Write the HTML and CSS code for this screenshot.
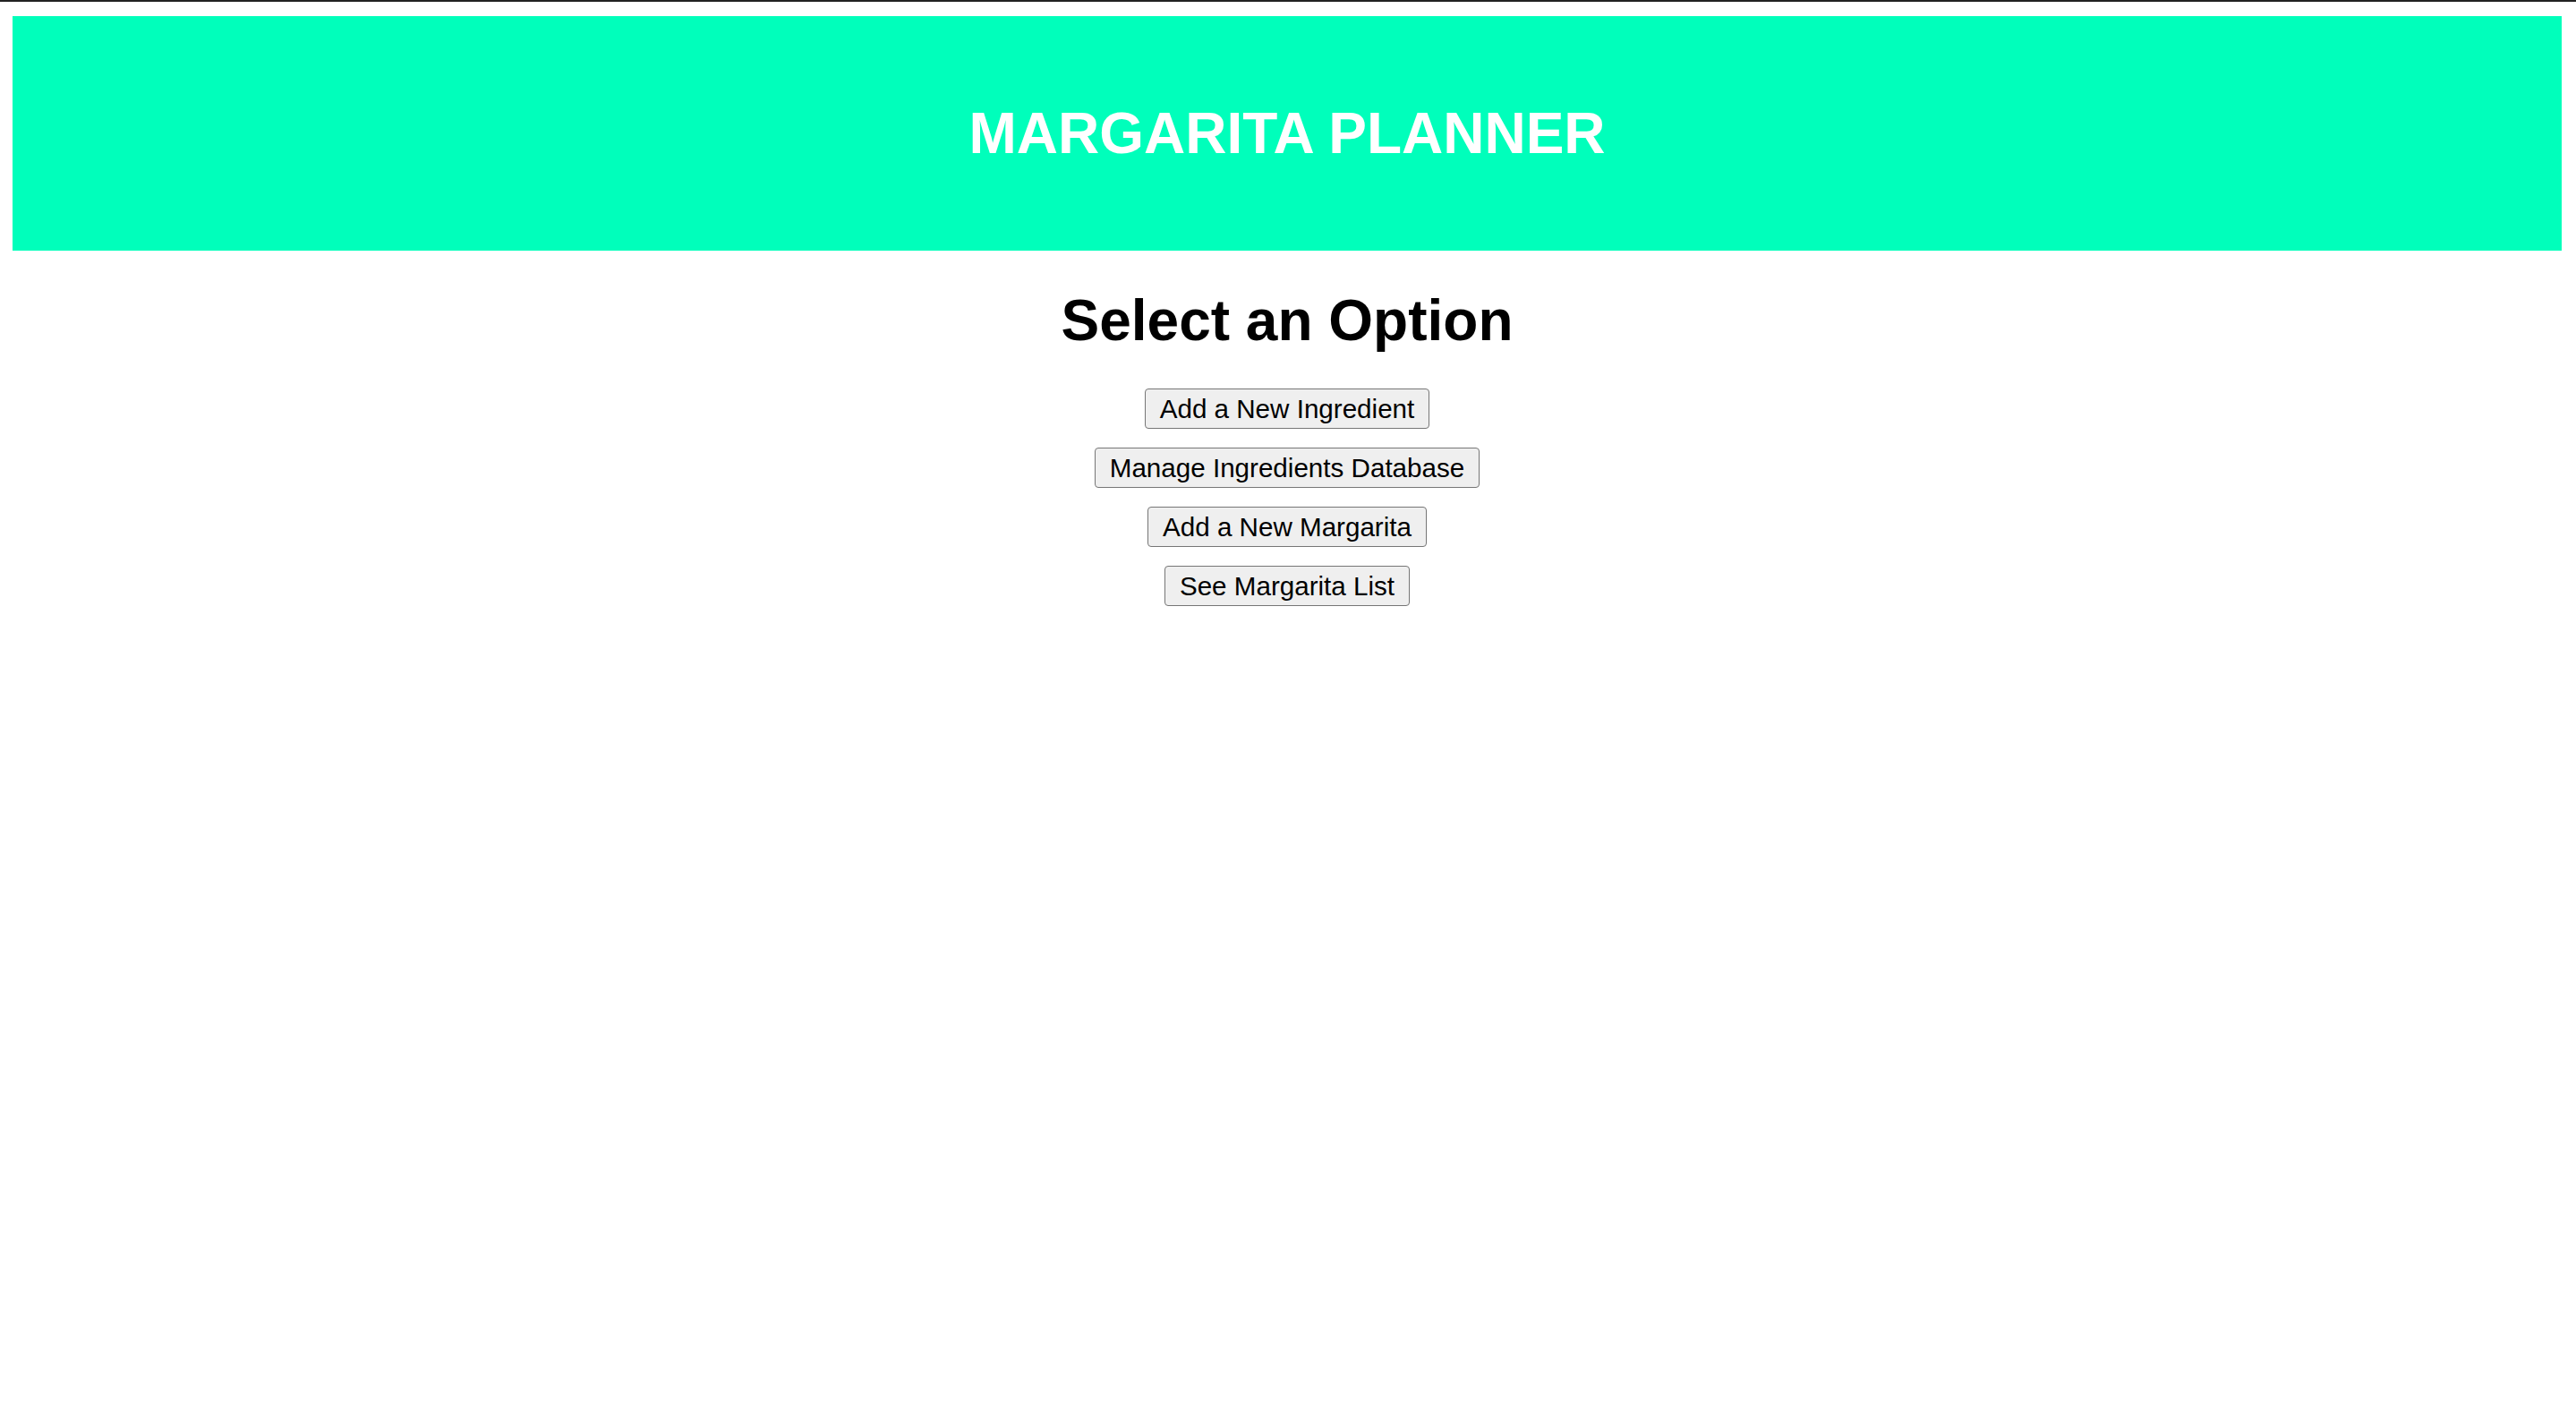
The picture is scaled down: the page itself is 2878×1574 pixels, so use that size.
FILE: index.html
```html
<!DOCTYPE html>
<html lang="en">
<head>
<meta charset="utf-8">
<title>Margarita Planner</title>
<link rel="stylesheet" href="styles.css">
</head>
<body>
<div class="topline"></div>
<div class="page">
  <header class="banner">
    <h1 class="banner-title">MARGARITA PLANNER</h1>
  </header>
  <main class="menu">
    <h2 class="menu-title">Select an Option</h2>
    <div class="menu-buttons">
      <button class="menu-btn" type="button">Add a New Ingredient</button>
      <button class="menu-btn" type="button">Manage Ingredients Database</button>
      <button class="menu-btn" type="button">Add a New Margarita</button>
      <button class="menu-btn" type="button">See Margarita List</button>
    </div>
  </main>
</div>
</body>
</html>
```

FILE: styles.css
```css
html, body {
  margin: 0;
  padding: 0;
  background: #ffffff;
}

body {
  font-family: "Liberation Sans", Arial, Helvetica, sans-serif;
  color: #000000;
}

.topline {
  height: 2px;
  background: #222222;
}

.page {
  padding: 16px 16px 0 14px;
}

.banner {
  height: 262px;
  background: #00ffbb;
  display: flex;
  align-items: center;
  justify-content: center;
}

.banner-title {
  margin: 0;
  color: #ffffff;
  font-size: 64px;
  font-weight: bold;
  line-height: 74px;
  text-align: center;
}

.menu {
  display: flex;
  flex-direction: column;
  align-items: center;
}

.menu-title {
  margin: 41px 0 0 0;
  font-size: 64px;
  font-weight: bold;
  line-height: 74px;
  text-align: center;
}

.menu-buttons {
  margin-top: 39px;
  display: flex;
  flex-direction: column;
  align-items: center;
  gap: 21px;
}

.menu-btn {
  font-family: "Liberation Sans", Arial, Helvetica, sans-serif;
  font-size: 29.6px;
  line-height: 35px;
  padding: 4px 16px;
  margin: 0;
  color: #000000;
  background: #efefef;
  border: 1px solid #767676;
  border-radius: 4px;
}
```
